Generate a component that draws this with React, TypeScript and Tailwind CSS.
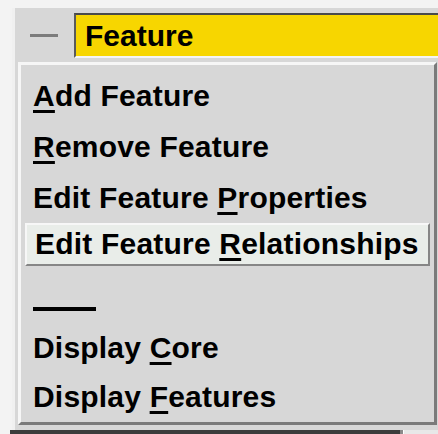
import React from "react";

type Item = { before: string; key: string; after: string; h: string; active?: boolean };

const items: Item[] = [
  { before: "", key: "A", after: "dd Feature", h: "h-[51px]" },
  { before: "", key: "R", after: "emove Feature", h: "h-[51px]" },
  { before: "Edit Feature ", key: "P", after: "roperties", h: "h-[50px]" },
  { before: "Edit Feature ", key: "R", after: "elationships", h: "h-[44px]", active: true },
];

const lower: Item[] = [
  { before: "Display ", key: "C", after: "ore", h: "h-[49px]" },
  { before: "Display ", key: "F", after: "eatures", h: "h-[50px]" },
];

function Label({ it }: { it: Item }) {
  return (
    <span className="whitespace-pre">
      {it.before}
      <span className="underline decoration-[3px] underline-offset-[4px]">{it.key}</span>
      {it.after}
    </span>
  );
}

function Row({ it }: { it: Item }) {
  if (it.active) {
    return (
      <div className={`${it.h} mx-[4px] flex items-center border-2 border-t-[#f7f7f7] border-l-[#f7f7f7] border-b-[#868686] border-r-[#868686] bg-[#e9ede9] pl-[8px]`}>
        <Label it={it} />
      </div>
    );
  }
  return (
    <div className={`${it.h} flex items-center pl-[12px]`}>
      <Label it={it} />
    </div>
  );
}

export default function App() {
  return (
    <div
      className="relative h-[434px] w-[438px] overflow-hidden bg-[#f3f3f3] text-black"
      style={{ fontFamily: '"Liberation Sans", Arial, sans-serif' }}
    >
      {/* window body */}
      <div className="ml-[12px] mt-[8px] flex h-[422px] flex-col border-l-[3px] border-l-[#f0f0f0] bg-[#d7d7d7]">
        <div className="flex items-center pt-[5px]">
          <div className="ml-[15px] h-[3px] w-[28px] bg-[#7c7c7c]" />
          <div className="ml-[16px] flex h-[45px] flex-1 items-center border-b-2 border-l-2 border-t-2 border-b-[#f5f5f5] border-l-[#5a5a5a] border-t-[#4a4a4a] bg-[#f7d600] pl-[9px] text-[30px] font-bold leading-none">
            Feature
          </div>
        </div>
      </div>
      {/* strip below the window */}
      <div className="flex h-[4px]">
        <div className="ml-[10px] w-[390px] bg-[#3c3c3c]" />
        <div className="w-[3px] bg-[#8a8a8a]" />
        <div className="flex-1 border-l border-l-[#ffffff] bg-[#e8e8e8]" />
      </div>

      {/* pulldown menu */}
      <div className="absolute left-[18px] top-[62px] flex h-[363px] w-[419px] flex-col border-[3px] border-t-[#f6f6f6] border-l-[#f6f6f6] border-b-[#7a7a7a] border-r-[#7a7a7a] bg-[#d7d7d7] text-[30px] font-bold leading-none tracking-[0.2px]">
        <div className="h-[6px]" />
        {items.map((it, i) => (
          <Row key={i} it={it} />
        ))}
        <div className="h-[57px] pl-[12px] pt-[41px]">
          <div className="h-[4px] w-[63px] bg-black" />
        </div>
        {lower.map((it, i) => (
          <Row key={i} it={it} />
        ))}
      </div>
    </div>
  );
}
